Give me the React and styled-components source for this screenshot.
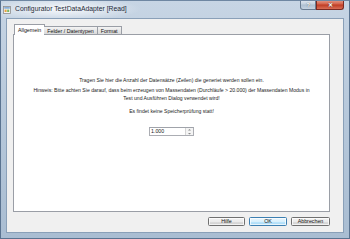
import React, { useState } from 'react';
import styled, { createGlobalStyle } from 'styled-components';

const GlobalStyle = createGlobalStyle`
  html, body {
    margin: 0;
    padding: 0;
    background: #ffffff;
  }
  body {
    font-family: Tahoma, 'Liberation Sans', Arial, sans-serif;
  }
`;

const Window = styled.div`
  width: 350px;
  height: 239px;
  box-sizing: border-box;
  display: flex;
  flex-direction: column;
  padding: 0 5px 5px 5px;
  background: linear-gradient(180deg, #c7d5e4 0%, #b9cadc 40%, #a9bdd2 100%);
  border: 1px solid #5a7390;
  border-top-color: #6f87a2;
  overflow: hidden;
`;

const TitleBar = styled.div`
  height: 17px;
  display: flex;
  align-items: flex-start;
  background: radial-gradient(ellipse 80px 12px at 60px 8px, rgba(255, 255, 255, 0.85), rgba(255, 255, 255, 0));
  margin: 0 -5px;
  padding: 0 5px 0 2px;
`;

const TitleIcon = styled.svg`
  width: 8px;
  height: 8px;
  margin: 5px 4px 0 0;
  flex: none;
`;

const TitleText = styled.span`
  font-size: 6.8px;
  line-height: 17px;
  color: #1d2a38;
  white-space: nowrap;
  margin-top: -1px;
`;

const CaptionButtons = styled.div`
  margin-left: auto;
  display: flex;
  margin-top: -1px;
`;

const CaptionButton = styled.div`
  width: ${(p) => p.$w}px;
  height: 9px;
  display: flex;
  align-items: center;
  justify-content: center;
  font-size: 6px;
  font-weight: bold;
  color: #ffffff;
  border: 1px solid ${(p) => (p.$close ? '#7b2a22' : '#6a7d92')};
  border-top: none;
  border-radius: ${(p) => (p.$close ? '0 0 3px 0' : '0 0 0 3px')};
  background: ${(p) =>
    p.$close
      ? 'linear-gradient(180deg, #e6a08e 0%, #d4624b 45%, #c03d24 55%, #d86e56 100%)'
      : 'linear-gradient(180deg, #e2e9f1 0%, #c5d2df 45%, #aebfd0 55%, #c5d3e2 100%)'};
  text-shadow: 0 0 1px #333;
`;

const Client = styled.div`
  flex: 1;
  display: flex;
  flex-direction: column;
  background: #f0f0f0;
  padding: 6px 13px 6px 6px;
  border: 1px solid #8aa0b8;
  min-height: 0;
`;

const TabStrip = styled.div`
  display: flex;
  align-items: flex-end;
  height: 10px;
  padding-left: 1px;
  position: relative;
  z-index: 1;
  margin-bottom: -1px;
`;

const Tab = styled.div`
  height: ${(p) => (p.$active ? 11 : 9)}px;
  box-sizing: border-box;
  padding: 0 3px;
  margin: ${(p) => (p.$active ? '0 -1px 0 0' : '0 0 0 0')};
  display: flex;
  align-items: center;
  font-size: 5.3px;
  color: #111;
  white-space: nowrap;
  border: 1px solid #9a9ea6;
  border-bottom: ${(p) => (p.$active ? 'none' : '1px solid #9a9ea6')};
  background: ${(p) => (p.$active ? '#ffffff' : 'linear-gradient(180deg, #f4f4f4 0%, #e6e6e6 50%, #dadada 100%)')};
  border-left-width: ${(p) => (p.$first ? 1 : 0)}px;
  ${(p) => p.$active && 'border-left-width: 1px; border-right-width: 1px;'}
`;

const Panel = styled.div`
  flex: 1;
  background: #ffffff;
  border: 1px solid #9a9ea6;
  display: flex;
  flex-direction: column;
  align-items: center;
  padding-top: 41px;
  font-size: 5.1px;
  color: #1b1b1b;
`;

const Line = styled.p`
  margin: 0 0 ${(p) => p.$gap || 0}px 0;
  line-height: 8px;
  text-align: center;
  white-space: nowrap;
`;

const SpinBox = styled.div`
  margin-top: 12px;
  width: 45px;
  height: 9px;
  box-sizing: border-box;
  display: flex;
  border: 1px solid #abadb3;
  border-top-color: #a0a3aa;
  background: #ffffff;
`;

const SpinValue = styled.span`
  flex: 1;
  font-size: 5.3px;
  line-height: 7px;
  padding-left: 1px;
`;

const SpinArrows = styled.div`
  width: 7px;
  display: flex;
  flex-direction: column;
  border-left: 1px solid #d4d4d4;
  background: #f4f4f4;
`;

const Arrow = styled.svg`
  width: 7px;
  height: 3.5px;
`;

const ButtonRow = styled.div`
  display: flex;
  justify-content: flex-end;
  gap: 4px;
  margin-top: 5px;
  padding-right: 0;
`;

const DialogButton = styled.button`
  width: ${(p) => p.$w}px;
  height: 9px;
  padding: 0;
  box-sizing: border-box;
  font-family: inherit;
  font-size: 5.3px;
  line-height: 7px;
  color: #111;
  border: 1px solid ${(p) => (p.$default ? '#3c7fb1' : '#707070')};
  border-radius: 1.5px;
  background: ${(p) =>
    p.$default
      ? 'linear-gradient(180deg, #eaf6fd 0%, #d9f0fc 50%, #bee6fd 52%, #a7d9f5 100%)'
      : 'linear-gradient(180deg, #f2f2f2 0%, #ebebeb 50%, #dddddd 52%, #cfcfcf 100%)'};
  box-shadow: inset 0 0 0 1px rgba(255, 255, 255, 0.7);
`;

const AppIcon = () => (
  <TitleIcon viewBox="0 0 8 8">
    <rect x="0.5" y="0.5" width="7" height="7" fill="#f3f3f3" stroke="#8c8c8c" strokeWidth="0.8" />
    <rect x="1.2" y="1.2" width="5.6" height="1.4" fill="#6e9fd4" />
    <rect x="1.6" y="3.6" width="2" height="2.4" fill="#e8a13a" />
    <rect x="4.2" y="3.6" width="2" height="2.4" fill="#7bb65a" />
  </TitleIcon>
);

const tabs = ['Allgemein', 'Felder / Datentypen', 'Format'];

const App = () => {
  const [active, setActive] = useState(0);
  const [count] = useState('1.000');

  return (
    <>
      <GlobalStyle />
      <Window>
        <TitleBar>
          <AppIcon />
          <TitleText>Configurator TestDataAdapter [Read]</TitleText>
          <CaptionButtons>
            <CaptionButton $w={14}>?</CaptionButton>
            <CaptionButton $w={26} $close>
              ✕
            </CaptionButton>
          </CaptionButtons>
        </TitleBar>
        <Client>
          <TabStrip>
            {tabs.map((t, i) => (
              <Tab key={t} $active={i === active} $first={i === 0} onClick={() => setActive(i)}>
                {t}
              </Tab>
            ))}
          </TabStrip>
          <Panel>
            <Line $gap={2}>
              Tragen Sie hier die Anzahl der Datensätze (Zeilen) die generiet werden sollen ein.
            </Line>
            <Line>
              Hinweis: Bitte achten Sie darauf, dass beim erzeugen von Massendaten (Durchläufe &gt; 20.000) der
              Massendaten Modus in
            </Line>
            <Line $gap={5}>Test und Ausführen Dialog verwendet wird!</Line>
            <Line>Es findet keine Speicherprüfung statt!</Line>
            <SpinBox>
              <SpinValue>{count}</SpinValue>
              <SpinArrows>
                <Arrow viewBox="0 0 7 3.5">
                  <path d="M2 2.6 L3.5 1 L5 2.6 Z" fill="#8a8a8a" />
                </Arrow>
                <Arrow viewBox="0 0 7 3.5">
                  <path d="M2 0.9 L3.5 2.5 L5 0.9 Z" fill="#8a8a8a" />
                </Arrow>
              </SpinArrows>
            </SpinBox>
          </Panel>
          <ButtonRow>
            <DialogButton $w={37}>Hilfe</DialogButton>
            <DialogButton $w={38} $default>
              OK
            </DialogButton>
            <DialogButton $w={39}>Abbrechen</DialogButton>
          </ButtonRow>
        </Client>
      </Window>
    </>
  );
};

export default App;
